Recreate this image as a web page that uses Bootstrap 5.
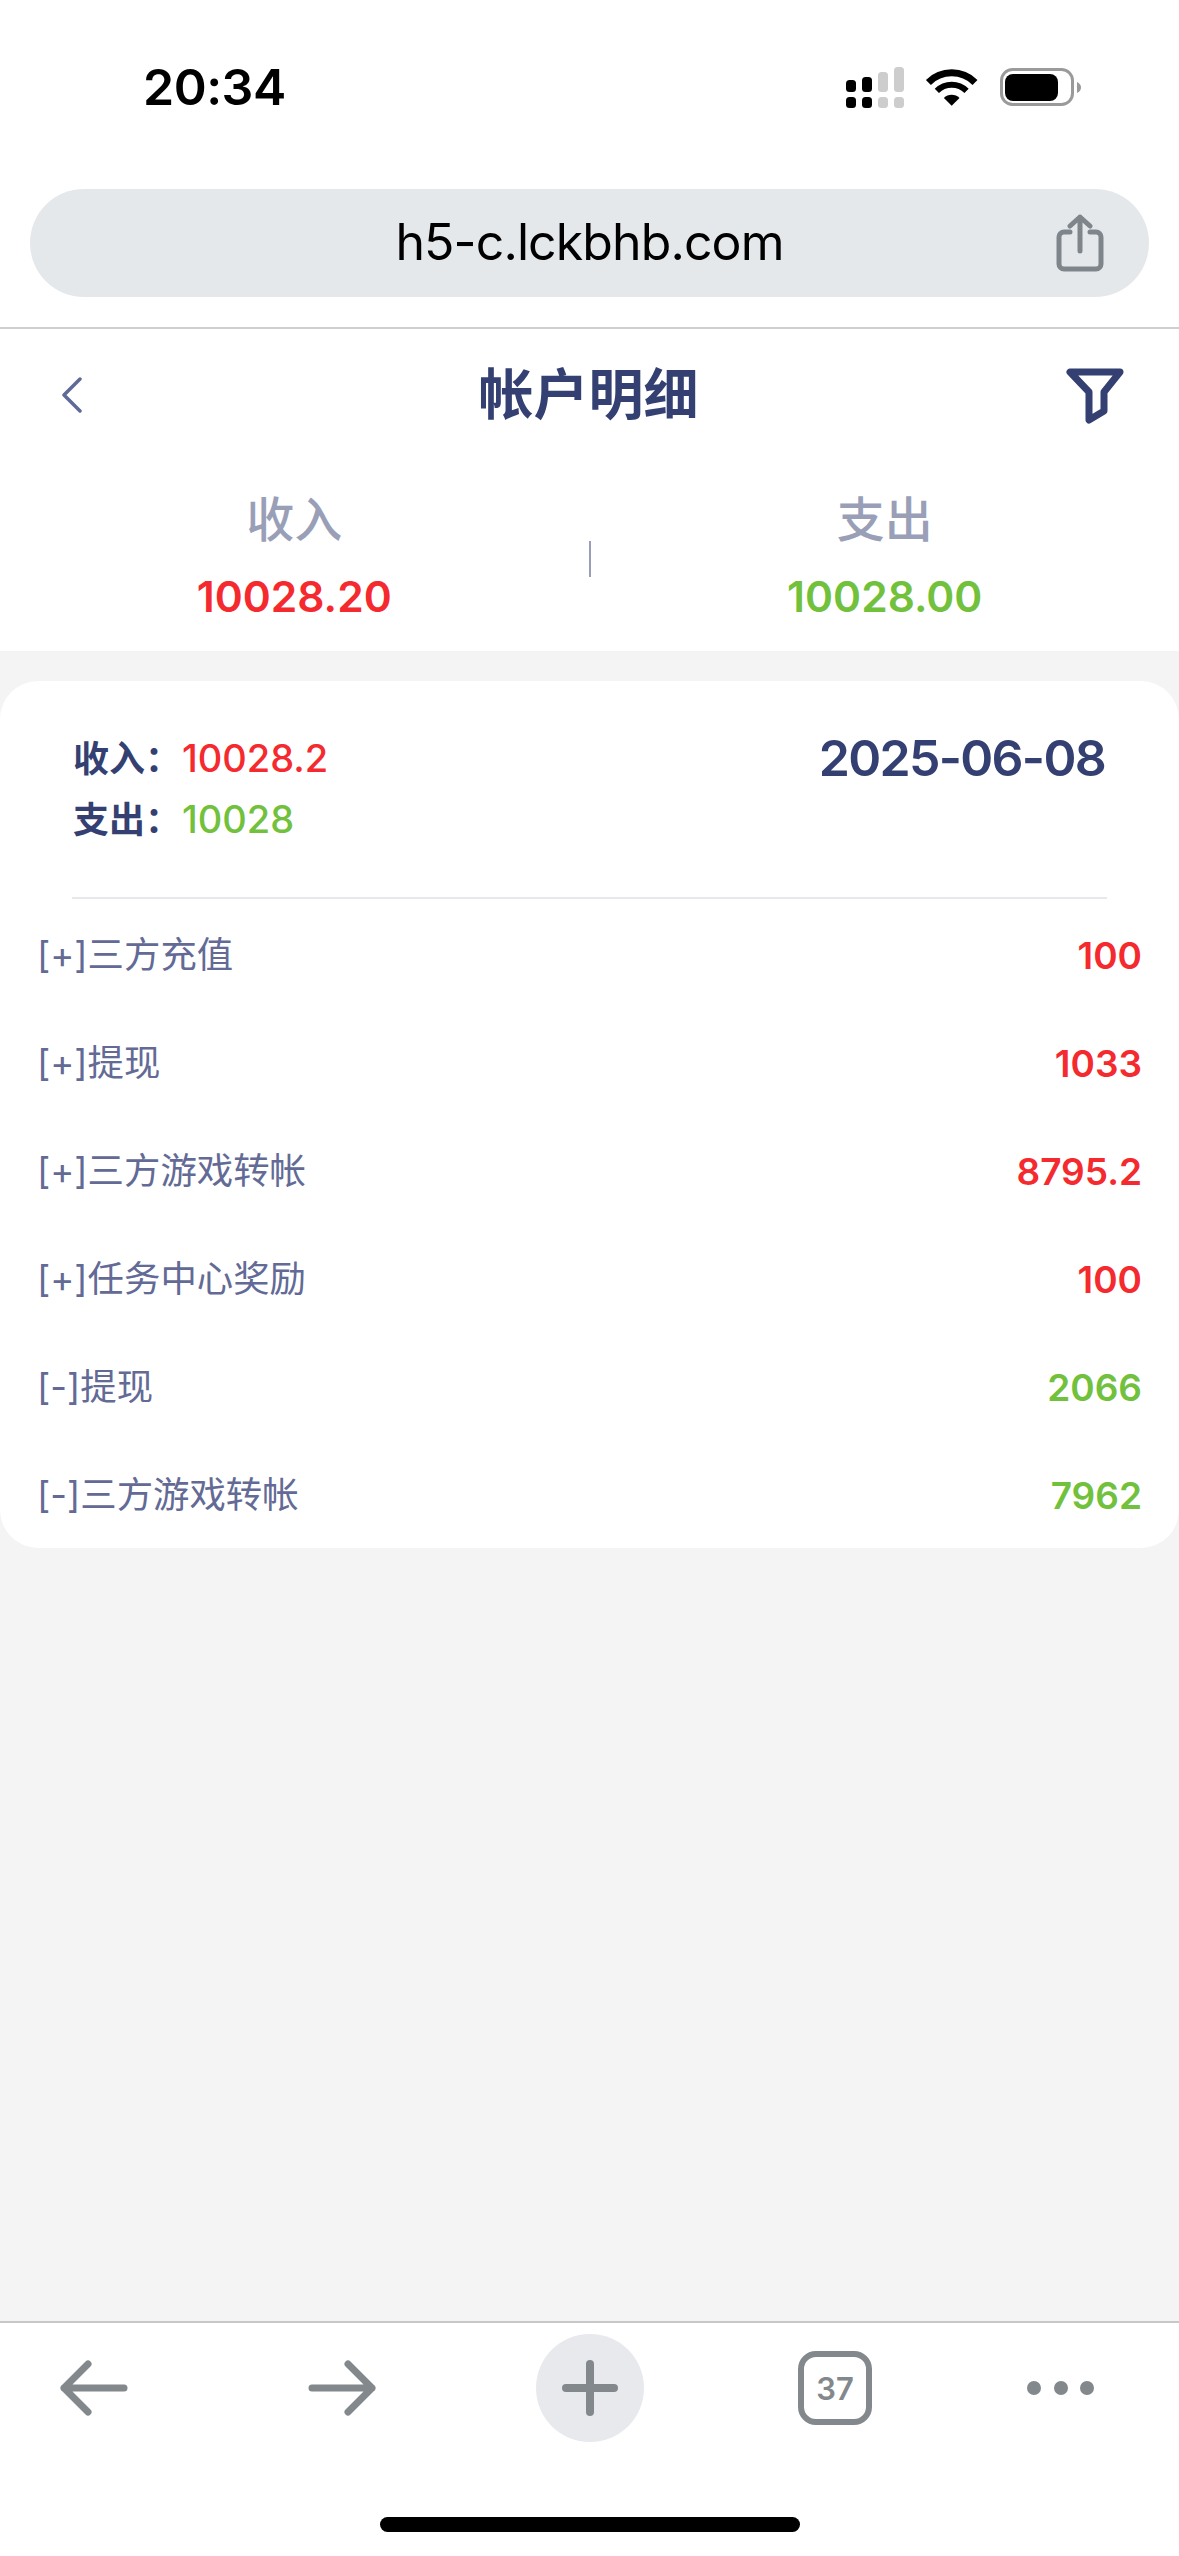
<!DOCTYPE html>
<html lang="zh-CN">
<head>
<meta charset="utf-8">
<title>帐户明细</title>
<link rel="stylesheet" href="https://cdn.jsdelivr.net/npm/bootstrap@5.3.0/dist/css/bootstrap.min.css">
<style>
html,body{margin:0;background:#fff}
.phone{width:1179px;height:2556px;overflow:hidden;font-family:Inter,"Noto Sans CJK SC",sans-serif;background:#fff}
.phone>div{flex:none}
.status-row{height:189px;padding:0 98px 15px 143px}
.clock{font-size:50px;font-weight:600;line-height:1;color:#000;letter-spacing:-.5px}
.url-wrap{height:140px;padding:0 30px 0;border-bottom:2px solid #cfcfcf}
.url-pill{height:108px;background:#e5e8eb;border-radius:54px;padding:0 45px 0 93px}
.url-text{font-size:50px;line-height:1;color:#000;font-family:Inter,sans-serif;letter-spacing:-.9px;margin-bottom:2px}
.head-row{height:130px;padding:0 54px 0 62px}
.back-ico{margin-top:2px}
.filter-ico{margin-top:4px}
.head-title{font-size:55px;font-weight:700;color:#343f72;line-height:1}
.stats{height:192px;padding-top:31px}
.stat-col{flex:1 1 0;text-align:center}
.stat-label{font-size:48px;line-height:60px;color:#9a9fb8;font-weight:500}
.stat-value{font-size:42.5px;line-height:60px;margin-top:17px;font-weight:600}
.stat-sep{width:2px;height:36px;background:#9a9fb8;margin-bottom:24px}
.red-num{color:#f42a2f}
.green-num{color:#72c13d}
.page-main{height:1670px;background:#f4f4f4;padding-top:30px}
.ledger{background:#fff;border-radius:38px;height:867px}
.ledger-top{height:216px;padding:47px 74px 0 73px}
.sum-line{font-size:36px;line-height:60px;font-weight:600;color:#343f72}
.sum-line span{font-size:38px;font-weight:500;margin-left:1px}
.sum-date{font-size:50px;line-height:60px;font-weight:600;color:#343f72;letter-spacing:-1.7px}
.ledger-rule{height:2px;background:#e8e8ec;margin:0 72px}
.ledger-list{padding:1px 37px 0 37px}
.ledger-item{height:108px;padding-top:4px}
.item-name{font-size:36.4px;color:#626a95;line-height:1.2}
.item-amt{font-size:37px;font-weight:600;line-height:1.2}
.toolbar{height:235px;border-top:2px solid #c8c8c8;background:#fff}
.tool-grid{display:grid;grid-template-columns:188px 308px 188px 302px 150px;height:130px;justify-items:center;align-items:center}
.plus-disc{width:108px;height:108px;border-radius:50%;background:#e8e9ed}
.tab-box{width:74px;height:74px;border:6px solid #82888c;border-radius:18px;font-size:31px;font-weight:600;color:#82888c;line-height:1}
.home-bar{width:420px;height:15px;background:#000;border-radius:8px;margin:64px auto 0}
</style>
</head>
<body>
<div class="phone d-flex flex-column">
  <div class="status-row d-flex align-items-center justify-content-between">
    <span class="clock">20:34</span>
    <svg width="235" height="41" viewBox="0 0 235 41">
      <g fill="#000"><rect x="0" y="13" width="10" height="12" rx="3.5"/><rect x="16" y="10" width="10" height="15" rx="3.5"/><rect x="0" y="30" width="10" height="11" rx="3.5"/><rect x="16" y="30" width="10" height="11" rx="3.5"/></g>
      <g fill="#cdcdcd"><rect x="32" y="5" width="10" height="20" rx="3.5"/><rect x="48" y="0" width="10" height="25" rx="3.5"/><rect x="32" y="30" width="10" height="11" rx="3.5"/><rect x="48" y="30" width="10" height="11" rx="3.5"/></g>
      <g fill="none" stroke="#000"><path d="M82.4 15.4A33 33 0 0 1 129 15.4" stroke-width="7"/><path d="M90.85 23.85A21 21 0 0 1 120.55 23.85" stroke-width="6"/></g>
      <path d="M105.7 38.7L97.9 30.9A11 11 0 0 1 113.5 30.9Z" fill="#000"/>
      <rect x="155.5" y="2.5" width="71" height="35" rx="11" fill="none" stroke="#9a9a9a" stroke-width="3"/>
      <rect x="159" y="7" width="53" height="27" rx="8" fill="#000"/>
      <path d="M231 15Q235 17 235 20.5Q235 24 231 26Z" fill="#9a9a9a"/>
    </svg>
  </div>
  <div class="url-wrap">
    <div class="url-pill d-flex align-items-center">
      <div class="url-text flex-grow-1 text-center">h5-c.lckbhb.com</div>
      <svg width="48" height="58" viewBox="0 0 48 58" fill="none" stroke="#7f868b" stroke-width="5" stroke-linecap="round" stroke-linejoin="round"><path d="M14 18H8a5 5 0 0 0-5 5V50a5 5 0 0 0 5 5H40a5 5 0 0 0 5-5V23a5 5 0 0 0-5-5H34"/><path d="M24 37V3M14 12L24 3L34 12"/></svg>
    </div>
  </div>
  <div class="head-row d-flex align-items-center justify-content-between">
    <svg class="back-ico" width="50" height="36" viewBox="0 0 50 36" fill="none" stroke="#5f6a97" stroke-width="3.5" stroke-linecap="round" stroke-linejoin="round"><path d="M18 2L2 18L18 34"/></svg>
    <div class="head-title">帐户明细</div>
    <svg class="filter-ico" width="60" height="58" viewBox="0 0 60 58" fill="none" stroke="#343f72" stroke-width="7" stroke-linejoin="round"><path d="M5 5H55L39 25V44L24 53V25Z"/></svg>
  </div>
  <div class="stats d-flex">
    <div class="stat-col"><div class="stat-label">收入</div><div class="stat-value red-num">10028.20</div></div>
    <div class="stat-sep align-self-center"></div>
    <div class="stat-col"><div class="stat-label">支出</div><div class="stat-value green-num">10028.00</div></div>
  </div>
  <div class="page-main">
    <div class="ledger">
      <div class="ledger-top d-flex justify-content-between align-items-start">
        <div>
          <div class="sum-line">收入：<span class="red-num">10028.2</span></div>
          <div class="sum-line">支出：<span class="green-num">10028</span></div>
        </div>
        <div class="sum-date">2025-06-08</div>
      </div>
      <div class="ledger-rule"></div>
      <div class="ledger-list">
        <div class="ledger-item d-flex justify-content-between align-items-center"><span class="item-name">[+]三方充值</span><span class="item-amt red-num">100</span></div>
        <div class="ledger-item d-flex justify-content-between align-items-center"><span class="item-name">[+]提现</span><span class="item-amt red-num">1033</span></div>
        <div class="ledger-item d-flex justify-content-between align-items-center"><span class="item-name">[+]三方游戏转帐</span><span class="item-amt red-num">8795.2</span></div>
        <div class="ledger-item d-flex justify-content-between align-items-center"><span class="item-name">[+]任务中心奖励</span><span class="item-amt red-num">100</span></div>
        <div class="ledger-item d-flex justify-content-between align-items-center"><span class="item-name">[-]提现</span><span class="item-amt green-num">2066</span></div>
        <div class="ledger-item d-flex justify-content-between align-items-center"><span class="item-name">[-]三方游戏转帐</span><span class="item-amt green-num">7962</span></div>
      </div>
    </div>
  </div>
  <div class="toolbar">
    <div class="tool-grid">
      <svg width="68" height="56" viewBox="0 0 68 56" fill="none" stroke="#82888c" stroke-width="7" stroke-linecap="round" stroke-linejoin="round"><path d="M64 28H4M28 4L4 28L28 52"/></svg>
      <svg width="68" height="56" viewBox="0 0 68 56" fill="none" stroke="#82888c" stroke-width="7" stroke-linecap="round" stroke-linejoin="round"><path d="M4 28H64M40 4L64 28L40 52"/></svg>
      <div class="plus-disc d-flex align-items-center justify-content-center">
        <svg width="56" height="56" viewBox="0 0 56 56" fill="none" stroke="#82888c" stroke-width="8" stroke-linecap="round"><path d="M28 4V52M4 28H52"/></svg>
      </div>
      <div class="tab-box d-flex align-items-center justify-content-center">37</div>
      <svg width="68" height="16" viewBox="0 0 68 16" fill="#82888c"><circle cx="7" cy="8" r="7"/><circle cx="34" cy="8" r="7"/><circle cx="60" cy="8" r="7"/></svg>
    </div>
    <div class="home-bar"></div>
  </div>
</div>
<script src="https://cdn.jsdelivr.net/npm/bootstrap@5.3.0/dist/js/bootstrap.bundle.min.js"></script>
</body>
</html>
